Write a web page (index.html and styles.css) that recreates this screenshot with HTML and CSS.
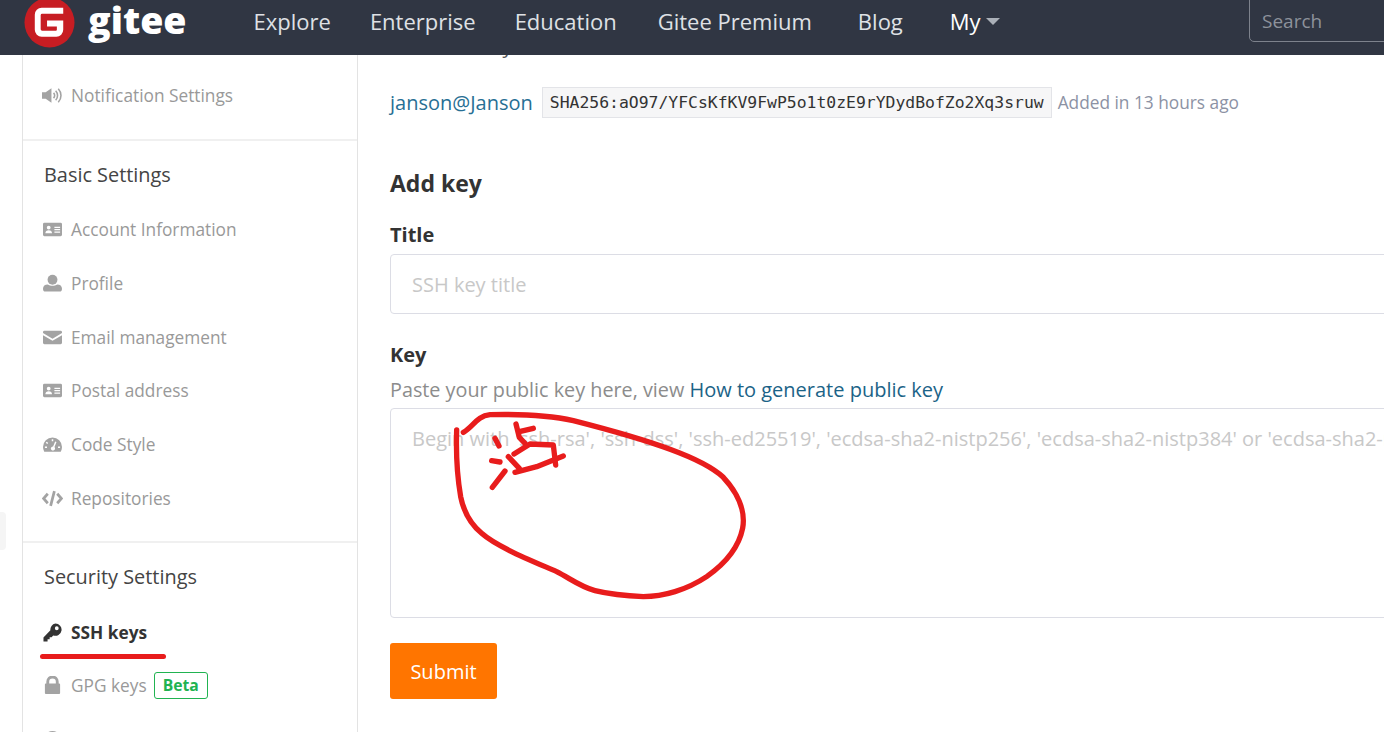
FILE: index.html
```html
<!DOCTYPE html>
<html lang="en">
<head>
  <meta charset="UTF-8" />
  <title>SSH keys - Gitee</title>
  <link rel="stylesheet" href="styles.css">
</head>
<body>

  <!-- Top bar -->
  <header class="topbar">
    <a class="brand">
      <svg class="brand-mark" viewBox="0 0 52 52">
        <circle cx="26" cy="26" r="25.5" fill="#c71d23"/>
        <path d="M37 11.5H18.5a7 7 0 0 0-7 7V34a7 7 0 0 0 7 7h15a7 7 0 0 0 7-7v-9.500H24v6h10V34a1 1 0 0 1-1 1H19a1.500 1.500 0 0 1-1.500-1.500V19a1.500 1.500 0 0 1 1.500-1.500h21.500v-6z" fill="#fff" transform="translate(-.5 -.5)"/>
      </svg>
      <span class="brand-name">gitee</span>
    </a>
    <nav class="topnav">
      <a>Explore</a>
      <a>Enterprise</a>
      <a class="topnav-edu">Education</a>
      <a class="topnav-premium">Gitee Premium</a>
      <a class="topnav-blog">Blog</a>
      <a class="topnav-my">My<i class="caret"></i></a>
    </nav>
    <div class="search">Search</div>
  </header>

  <div class="page">
    <aside class="sidebar">
      <div class="side-group">
        <a class="side-item">
          <svg class="ico ico-wide" viewBox="0 0 20 20"><path d="M0 7h3.500L9 3v14l-5.500-4H0z" fill="currentColor"/><path d="M11 7.500a3.500 3.500 0 0 1 0 5M13 5.500a6.500 6.500 0 0 1 0 9M15.500 3.500a9.500 9.500 0 0 1 0 13" fill="none" stroke="currentColor" stroke-width="1.500"/></svg>
          Notification Settings
        </a>
      </div>

      <div class="side-group">
        <h3 class="side-title">Basic Settings</h3>
        <a class="side-item">
          <svg class="ico" viewBox="0 0 20 20"><path fill-rule="evenodd" d="M1.500 3h17A1.500 1.500 0 0 1 20 4.500v11a1.500 1.500 0 0 1-1.500 1.500h-17A1.500 1.500 0 0 1 0 15.500v-11A1.500 1.500 0 0 1 1.500 3zM6 6a2 2 0 1 0 0 4 2 2 0 0 0 0-4zM2.500 14h7c0-2-1.300-3.300-3.500-3.300S2.500 12 2.500 14zM12 7v1.300h6V7zm0 2.500v1.300h6V9.500zm0 2.500v1.300h6V12z" fill="currentColor"/></svg>
          Account Information
        </a>
        <a class="side-item">
          <svg class="ico" viewBox="0 0 20 20"><circle cx="10" cy="6" r="5.200" fill="currentColor"/><path d="M0 15.500c0-3 2-4.500 5-4.500 1.300 1 3.300 1.400 5 1.400s3.700-.4 5-1.400c3 0 5 1.500 5 4.500 0 2-1 3-2.500 3h-15C1 18.500 0 17.500 0 15.500z" fill="currentColor"/></svg>
          Profile
        </a>
        <a class="side-item">
          <svg class="ico" viewBox="0 0 20 20"><path d="M1.500 3h17A1.500 1.500 0 0 1 20 4.500v.8l-10 6-10-6v-.8A1.500 1.500 0 0 1 1.500 3zM0 7.500l10 6 10-6v8a1.500 1.500 0 0 1-1.500 1.500h-17A1.500 1.500 0 0 1 0 15.500z" fill="currentColor"/></svg>
          Email management
        </a>
        <a class="side-item">
          <svg class="ico" viewBox="0 0 20 20"><path fill-rule="evenodd" d="M1.500 3h17A1.500 1.500 0 0 1 20 4.500v11a1.500 1.500 0 0 1-1.500 1.500h-17A1.500 1.500 0 0 1 0 15.500v-11A1.500 1.500 0 0 1 1.500 3zM6 6a2 2 0 1 0 0 4 2 2 0 0 0 0-4zM2.500 14h7c0-2-1.300-3.300-3.500-3.300S2.500 12 2.500 14zM12 7v1.300h6V7zm0 2.500v1.300h6V9.500zm0 2.500v1.300h6V12z" fill="currentColor"/></svg>
          Postal address
        </a>
        <a class="side-item">
          <svg class="ico" viewBox="0 0 20 20"><path fill-rule="evenodd" d="M10 2.500a10 10 0 0 1 10 10c0 1.800-.5 3.500-1.300 5H1.300A10 10 0 0 1 0 12.500a10 10 0 0 1 10-10zM9.200 4.500v2.200h1.600V4.500zM4 7l-1.100 1.100 1.500 1.500 1.100-1.100zM2 12v1.600h2.200V12zm13.800 0v1.600H18V12zm-3-5.200L10.600 12a2.200 2.200 0 1 0 1.500.7l2.100-5.300z" fill="currentColor"/></svg>
          Code Style
        </a>
        <a class="side-item">
          <svg class="ico ico-wide" viewBox="0 0 20 20"><path d="M5.500 5.500L1.500 10l4 4.500M14.500 5.500l4 4.500-4 4.500M11.800 3L8.200 17" fill="none" stroke="currentColor" stroke-width="2.600"/></svg>
          Repositories
        </a>
      </div>

      <div class="side-group">
        <h3 class="side-title">Security Settings</h3>
        <a class="side-item side-item-active">
          <svg class="ico" viewBox="0 0 20 20"><path fill-rule="evenodd" d="M13 .5a6.500 6.500 0 1 1-2.200 12.600L9 15H7v2.200H4.800v2.300H.5v-4.300l7.300-7.500A6.500 6.500 0 0 1 13 .5zm1.500 3a2 2 0 1 0 0 4 2 2 0 0 0 0-4z" fill="currentColor"/></svg>
          SSH keys
        </a>
        <a class="side-item">
          <svg class="ico" viewBox="0 0 20 20"><path fill-rule="evenodd" d="M3.500 8V6a6.500 6.500 0 0 1 13 0v2h.5a1 1 0 0 1 1 1v9a1 1 0 0 1-1 1H3a1 1 0 0 1-1-1V9a1 1 0 0 1 1-1zm3 0h7V6a3.500 3.500 0 0 0-7 0z" fill="currentColor"/></svg>
          GPG keys
          <span class="badge">Beta</span>
        </a>
        <a class="side-item">
          <svg class="ico" viewBox="0 0 20 20"><circle cx="10" cy="10" r="9" fill="currentColor"/></svg>
          Logs
        </a>
      </div>
    </aside>

    <main class="content">
      <p class="clipped-title">Your SSH keys</p>

      <div class="key-row">
        <a class="link">janson@Janson</a>
        <code class="fingerprint">SHA256:aO97/YFCsKfKV9FwP5o1t0zE9rYDydBofZo2Xq3sruw</code>
        <span class="muted">Added in 13 hours ago</span>
      </div>

      <form class="key-form">
        <h2 class="form-title">Add key</h2>
        <label class="field-label" for="title">Title</label>
        <input class="field-input" id="title" type="text" placeholder="SSH key title">

        <label class="field-label field-label-key" for="key">Key</label>
        <p class="field-help">Paste your public key here, view <a class="link-dark">How to generate public key</a></p>
        <textarea class="field-input field-area" id="key" placeholder="Begin with 'ssh-rsa', 'ssh-dss', 'ssh-ed25519', 'ecdsa-sha2-nistp256', 'ecdsa-sha2-nistp384' or 'ecdsa-sha2-nistp521'"></textarea>

        <button class="submit" type="button">Submit</button>
      </form>
    </main>
  </div>

  <!-- Small tab stuck to the left window edge -->
  <div class="edge-tab"></div>

  <!-- Red pen marks drawn over the screenshot -->
  <svg class="scribble" viewBox="0 0 1384 732">
    <path d="M42.500 656.500H163.500" stroke-width="5"/>
    <g transform="translate(440 400) scale(.3333)">
      <path d="M50 90C48 150 50 220 62 290C72 340 95 375 125 400C170 440 270 480 350 515C390 535 420 560 465 572C510 583 560 588 610 590C670 590 740 570 800 530C850 495 895 450 908 385C918 330 890 275 850 232C810 195 750 170 690 148C610 118 490 85 400 62C330 46 230 42 150 44C110 48 100 80 70 97"/>
      <path d="M228 72L238 112L255 130M238 95L280 85"/>
      <path d="M222 162L270 132L340 135L347 195"/>
      <path d="M205 170L238 205M225 217L290 200L370 168"/>
      <path d="M165 115L177 138M155 182L180 186M195 213L157 262"/>
    </g>
  </svg>

</body>
</html>
```

FILE: styles.css
```css
* {
  box-sizing: border-box;
}

html, body {
  height: 732px;
  overflow: hidden;
}

body {
  margin: 0;
  font-family: "Open Sans", "Liberation Sans", sans-serif;
  background: #fff;
  color: #333;
}

.topbar {
  display: flex;
  align-items: center;
  height: 55px;
  background: #303643;
  overflow: hidden;
}

.brand {
  display: flex;
  align-items: center;
  margin-left: 24px;
  margin-top: -11px;
}

.brand-mark {
  width: 51px;
  height: 51px;
}

.brand-name {
  margin-left: 13px;
  font-size: 37.5px;
  font-weight: 800;
  line-height: 51px;
  margin-top: -6px;
  color: #fff;
}

.topnav {
  display: flex;
  margin-left: 67px;
  margin-top: -13px;
  font-size: 22px;
  color: #dfe1e5;
}

.topnav a {
  margin-right: 39px;
}

.topnav .topnav-edu {
  margin-right: 41px;
}

.topnav .topnav-premium {
  margin-right: 46px;
}

.topnav .topnav-blog {
  margin-right: 47px;
}

.topnav-my {
  display: flex;
  align-items: center;
  color: #fff;
}

.caret {
  margin-left: 5px;
  border-top: 7px solid #aab0b8;
  border-left: 7px solid transparent;
  border-right: 7px solid transparent;
}

.search {
  position: absolute;
  left: 1249px;
  top: -6px;
  width: 300px;
  height: 48px;
  padding: 13px 12px 0;
  border: 1px solid #7d828c;
  border-radius: 5px;
  font-size: 19px;
  color: #8d929b;
}

.page {
  display: flex;
  height: 677px;
  overflow: hidden;
}

.sidebar {
  flex: none;
  width: 336px;
  height: 760px;
  margin-left: 22px;
  border-left: 1px solid #e3e3e3;
  border-right: 1px solid #e3e3e3;
}

.side-group {
  padding: 14px 0 16px 1px;
  border-bottom: 2px solid #f0f0f0;
}

.side-group:last-child {
  border-bottom: none;
}

.side-title {
  height: 40px;
  margin: 0 0 8px;
  padding-left: 20px;
  font-size: 19.9px;
  font-weight: 400;
  line-height: 40px;
  color: #444;
}

.side-item {
  display: flex;
  align-items: center;
  height: 53.75px;
  padding-left: 19px;
  font-size: 17.3px;
  color: #999;
}

.ico {
  flex: none;
  width: 19px;
  height: 19px;
  margin-right: 9px;
  color: #a3a3a3;
}

.ico-wide {
  width: 21px;
  height: 21px;
  margin-left: -1px;
  margin-right: 8px;
}

.side-item-active {
  font-weight: 700;
  color: #333;
}

.side-item-active .ico {
  color: #333;
}

.badge {
  margin-left: 7px;
  padding: 0 8px;
  border: 1px solid #21b351;
  border-radius: 3px;
  font-size: 15.7px;
  font-weight: 700;
  line-height: 25px;
  color: #21b351;
}

.content {
  flex: 1;
  min-width: 0;
  padding-left: 32px;
  overflow: hidden;
}

.clipped-title {
  width: 300px;
  height: 18px;
  margin: -18px 0 0;
  font-size: 20px;
  line-height: 18px;
  color: #555;
}

.key-row {
  display: flex;
  align-items: center;
  height: 32px;
  margin-top: 31px;
  white-space: nowrap;
}

.link {
  font-size: 20px;
  color: #276f94;
}

.fingerprint {
  height: 31px;
  margin-left: 9px;
  padding: 0 7px;
  border: 1px solid #e3e4e8;
  background: #f6f6f7;
  font-family: "DejaVu Sans Mono", "Liberation Mono", monospace;
  font-size: 16.42px;
  line-height: 29px;
  color: #333;
}

.muted {
  margin-left: 6px;
  font-size: 17.3px;
  color: #8c92a4;
}

.key-form {
  width: 1100px;
  margin-top: 46px;
}

.form-title {
  margin: 0;
  font-size: 23px;
  font-weight: 700;
  line-height: 38px;
  color: #333;
}

.field-label {
  display: block;
  margin-top: 17px;
  font-size: 20px;
  font-weight: 700;
  line-height: 32px;
  color: #333;
}

.field-label-key {
  margin-top: 25px;
}

.field-input {
  display: block;
  width: 100%;
  height: 60px;
  margin: 3px 0 0;
  padding: 0 21px;
  border: 1px solid #dcdde5;
  border-radius: 4px;
  background: #fff;
  font-family: inherit;
  font-size: 20px;
}

.field-input::placeholder {
  color: #c8c8c8;
  opacity: 1;
}

.field-help {
  margin: 4px 0 0;
  font-size: 19.8px;
  line-height: 30px;
  color: #8c8c8c;
}

.link-dark {
  font-size: 20px;
  color: #1b6387;
}

.field-area {
  height: 210px;
  margin-top: 3px;
  padding: 16px 21px;
  font-size: 20px;
  resize: none;
}

.submit {
  display: block;
  width: 107px;
  height: 56px;
  margin-top: 25px;
  padding-top: 2px;
  border: none;
  border-radius: 3px;
  background: #ff7500;
  font-family: inherit;
  font-size: 20px;
  color: #fff;
}

.edge-tab {
  position: absolute;
  left: -6px;
  top: 512px;
  width: 12px;
  height: 38px;
  border-radius: 4px;
  background: #f5f5f5;
}

.scribble {
  position: absolute;
  left: 0;
  top: 0;
  width: 1384px;
  height: 732px;
  fill: none;
  stroke: #e81c1c;
  stroke-width: 16;
  stroke-linecap: round;
  stroke-linejoin: round;
  pointer-events: none;
}
```
